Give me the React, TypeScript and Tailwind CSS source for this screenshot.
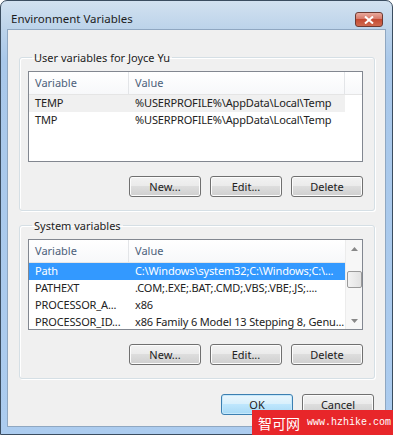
import React from 'react';

const font = { fontFamily: '"Noto Sans", "Liberation Sans", sans-serif' };

type Row = { name: string; value: string; state?: 'selected' | 'inactive' };

const userRows: Row[] = [
  { name: 'TEMP', value: '%USERPROFILE%\\AppData\\Local\\Temp', state: 'inactive' },
  { name: 'TMP', value: '%USERPROFILE%\\AppData\\Local\\Temp' },
];

const systemRows: Row[] = [
  { name: 'Path', value: 'C:\\Windows\\system32;C:\\Windows;C:\\...', state: 'selected' },
  { name: 'PATHEXT', value: '.COM;.EXE;.BAT;.CMD;.VBS;.VBE;.JS;....' },
  { name: 'PROCESSOR_A...', value: 'x86' },
  { name: 'PROCESSOR_ID...', value: 'x86 Family 6 Model 13 Stepping 8, Genu...' },
];

const Button: React.FC<{ label: string; isDefault?: boolean }> = ({ label, isDefault }) => (
  <button
    className={
      'w-[72px] h-[21px] shrink-0 rounded-[3px] border text-[11px] text-[#222] leading-none ' +
      (isDefault
        ? 'border-[#3c7fb1] bg-[linear-gradient(#eaf6fd_0%,#d9f0fc_45%,#bee6fd_50%,#a7d9f5_100%)] shadow-[inset_0_0_0_1px_#c5e8fb]'
        : 'border-[#707070] bg-[linear-gradient(#f2f2f2_0%,#ebebeb_45%,#dddddd_50%,#cfcfcf_100%)] shadow-[inset_0_0_0_1px_#fcfcfc]')
    }
  >
    {label}
  </button>
);

const ListView: React.FC<{ rows: Row[]; scroll?: boolean }> = ({ rows, scroll }) => (
  <div className="h-[91px] border border-[#828790] bg-white flex min-w-0 overflow-hidden">
    <div className="flex-1 min-w-0 flex flex-col overflow-hidden">
      <div className="h-[23px] shrink-0 flex items-center border-b border-[#e5e5e5] bg-[linear-gradient(#ffffff,#f7f8fa)] text-[11px] text-[#4c607a]">
        <div className="w-[100px] shrink-0 pl-[6px] h-full flex items-center border-r border-[#e3e5e8]">Variable</div>
        <div className={(scroll ? 'flex-1' : 'w-[216px] shrink-0 border-r border-[#e3e5e8]') + ' pl-[6px] h-full flex items-center'}>
          Value
        </div>
      </div>
      {rows.map((r) => (
        <div
          key={r.name}
          className={
            'h-[17px] shrink-0 flex items-center text-[11px] tracking-[-0.15px] whitespace-nowrap overflow-hidden ' +
            (r.state === 'selected'
              ? 'bg-[#3399ff] text-white'
              : r.state === 'inactive'
              ? 'bg-[#f0f0f0] text-[#222] w-[316px]'
              : 'text-[#222]')
          }
        >
          <div className="w-[100px] shrink-0 pl-[6px]">{r.name}</div>
          <div className="pl-[6px] shrink-0">{r.value}</div>
        </div>
      ))}
    </div>
    {scroll && (
      <div className="w-[17px] shrink-0 flex flex-col items-center bg-[#f7f7f7] border-l border-[#ececec]">
        <div className="h-[17px] flex items-center justify-center">
          <svg width="7" height="4" viewBox="0 0 7 4"><path d="M0 4 L3.5 0 L7 4 Z" fill="#888" /></svg>
        </div>
        <div className="h-[14px]" />
        <div className="w-[15px] h-[17px] rounded-[2px] border border-[#9a9a9a] bg-[linear-gradient(90deg,#f3f3f3,#e2e2e2)]" />
        <div className="flex-1" />
        <div className="h-[17px] flex items-center justify-center">
          <svg width="7" height="4" viewBox="0 0 7 4"><path d="M0 0 L7 0 L3.5 4 Z" fill="#888" /></svg>
        </div>
      </div>
    )}
  </div>
);

const Group: React.FC<{ title: string; rows: Row[]; scroll?: boolean; className?: string }> = ({
  title,
  rows,
  scroll,
  className,
}) => (
  <fieldset
    className={
      'min-w-0 border border-[#d5dfe5] rounded-[3px] shadow-[inset_1px_1px_0_#fff,1px_1px_0_#fff] ml-[11px] mr-[10px] pl-[8px] pr-[11px] pb-[13px] ' +
      (className || '')
    }
  >
    <legend className="ml-[4px] px-[2px] text-[11px] text-[#222] leading-[15px]">{title}</legend>
    <div className="mt-[6px]">
      <ListView rows={rows} scroll={scroll} />
    </div>
    <div className="flex justify-end gap-[9px] mt-[14px]">
      <Button label="New..." />
      <Button label="Edit..." />
      <Button label="Delete" />
    </div>
  </fieldset>
);

export default function App() {
  return (
    <div style={font} className="w-[393px] h-[435px] relative overflow-hidden bg-white">
      <div className="w-full h-full flex flex-col rounded-t-[7px] border border-[#3b4d60] bg-[linear-gradient(#d2e1f0_0px,#bcd3ea_28px,#a9c8ea_60px,#acccef_100%)]">
        <div className="h-[28px] flex items-start justify-between pl-[10px] pr-[9px] shrink-0">
          <span className="text-[11.5px] text-[#1c1c1c] mt-[10px] leading-[15px]">Environment Variables</span>
          <div className="w-[28px] h-[15px] mt-[11px] rounded-[3px] border border-[#6d3a33] bg-[linear-gradient(#e9a99c_0%,#d7796a_45%,#c44a32_50%,#cf6a4f_100%)] flex items-center justify-center">
            <svg width="10" height="8" viewBox="0 0 10 8">
              <path d="M1 0.5 L9 7.5 M9 0.5 L1 7.5" stroke="#fff" strokeWidth="2" />
            </svg>
          </div>
        </div>
        <div className="mx-[6px] mb-[7px] flex-1 bg-[#f0f0f0] border border-[#8fa7c1] flex flex-col">
          <Group title="User variables for Joyce Yu" rows={userRows} className="mt-[20px]" />
          <Group title="System variables" rows={systemRows} scroll className="mt-[7px]" />
          <div className="flex justify-end gap-[9px] mt-[15px] mr-[11px]">
            <Button label="OK" isDefault />
            <Button label="Cancel" />
          </div>
        </div>
      </div>
      <div className="absolute left-[252px] top-[410px] w-[141px] h-[25px] bg-[#e8262a] flex items-center pl-[6px] gap-[7px] text-white whitespace-nowrap">
        <span className="shrink-0 text-[14px] leading-none" style={{ fontFamily: '"Noto Sans CJK SC", sans-serif' }}>
          智可网
        </span>
        <span className="shrink-0 text-[10px] leading-none" style={{ fontFamily: '"Liberation Mono", monospace' }}>
          www.hzhike.com
        </span>
      </div>
    </div>
  );
}
